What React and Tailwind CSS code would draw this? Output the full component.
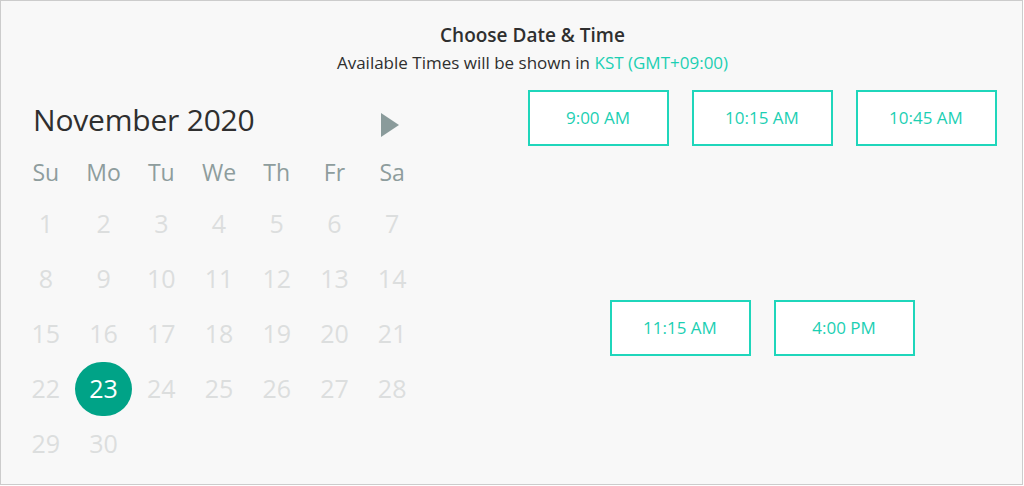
import React from "react";

const weeks = [
  [1, 2, 3, 4, 5, 6, 7],
  [8, 9, 10, 11, 12, 13, 14],
  [15, 16, 17, 18, 19, 20, 21],
  [22, 23, 24, 25, 26, 27, 28],
  [29, 30, null, null, null, null, null],
];
const days = ["Su", "Mo", "Tu", "We", "Th", "Fr", "Sa"];

function TimeBtn({ children }) {
  return (
    <button className="w-[141px] h-[56px] border-2 border-[#1fd6bb] bg-white text-[#1ccfb3] text-[17px] flex items-center justify-center">
      {children}
    </button>
  );
}

export default function App() {
  return (
    <div
      className="w-[1023px] h-[485px] border border-[#cccccc] bg-[#f8f8f8] text-[#333333] flex flex-col"
      style={{ fontFamily: '"Open Sans", "Noto Sans", sans-serif' }}
    >
      <div className="flex flex-col items-center pt-[21px] pl-[42px]">
        <div className="text-[19px] font-semibold leading-[26px] text-[#2f2f2f]">Choose Date &amp; Time</div>
        <div className="text-[17px] leading-[22px] mt-[4px] text-[#2f2f2f]">
          Available Times will be shown in <span className="text-[#1ccfb3]">KST (GMT+09:00)</span>
        </div>
      </div>
      <div className="flex">
        <div className="w-[503px] pl-[16px] pt-[24px]">
          <div className="flex items-center w-[404px] h-[44px]">
            <div className="text-[30px] leading-[40px] pl-[16px] text-[#2f2f2f] tracking-[-0.2px]">November 2020</div>
            <svg className="ml-auto mr-[22px] mt-[10px]" width="18" height="24" viewBox="0 0 18 24">
              <polygon points="0,0 18,12 0,24" fill="#8a9b9b" />
            </svg>
          </div>
          <div className="grid grid-cols-7 w-[404px] mt-[13px] h-[30px] items-center">
            {days.map((d) => (
              <div key={d} className="text-center text-[23px] text-[#8e9d9d]">
                {d}
              </div>
            ))}
          </div>
          <div className="flex flex-col w-[404px] mt-[11px]">
            {weeks.map((w, i) => (
              <div key={i} className="grid grid-cols-7 h-[55px] items-center">
                {w.map((n, j) => (
                  <div key={j} className="flex justify-center">
                    {n === 23 ? (
                      <div className="w-[58px] h-[54px] rounded-full bg-[#00a387] text-white text-[25px] flex items-center justify-center">
                        23
                      </div>
                    ) : (
                      <span className="text-[25px] text-[#dcdede]">{n}</span>
                    )}
                  </div>
                ))}
              </div>
            ))}
          </div>
        </div>
        <div className="flex-1 flex flex-col items-center pt-[16px] pr-[2px]">
          <div className="flex gap-[23px]">
            <TimeBtn>9:00 AM</TimeBtn>
            <TimeBtn>10:15 AM</TimeBtn>
            <TimeBtn>10:45 AM</TimeBtn>
          </div>
          <div className="flex gap-[23px] mt-[154px]">
            <TimeBtn>11:15 AM</TimeBtn>
            <TimeBtn>4:00 PM</TimeBtn>
          </div>
        </div>
      </div>
    </div>
  );
}
